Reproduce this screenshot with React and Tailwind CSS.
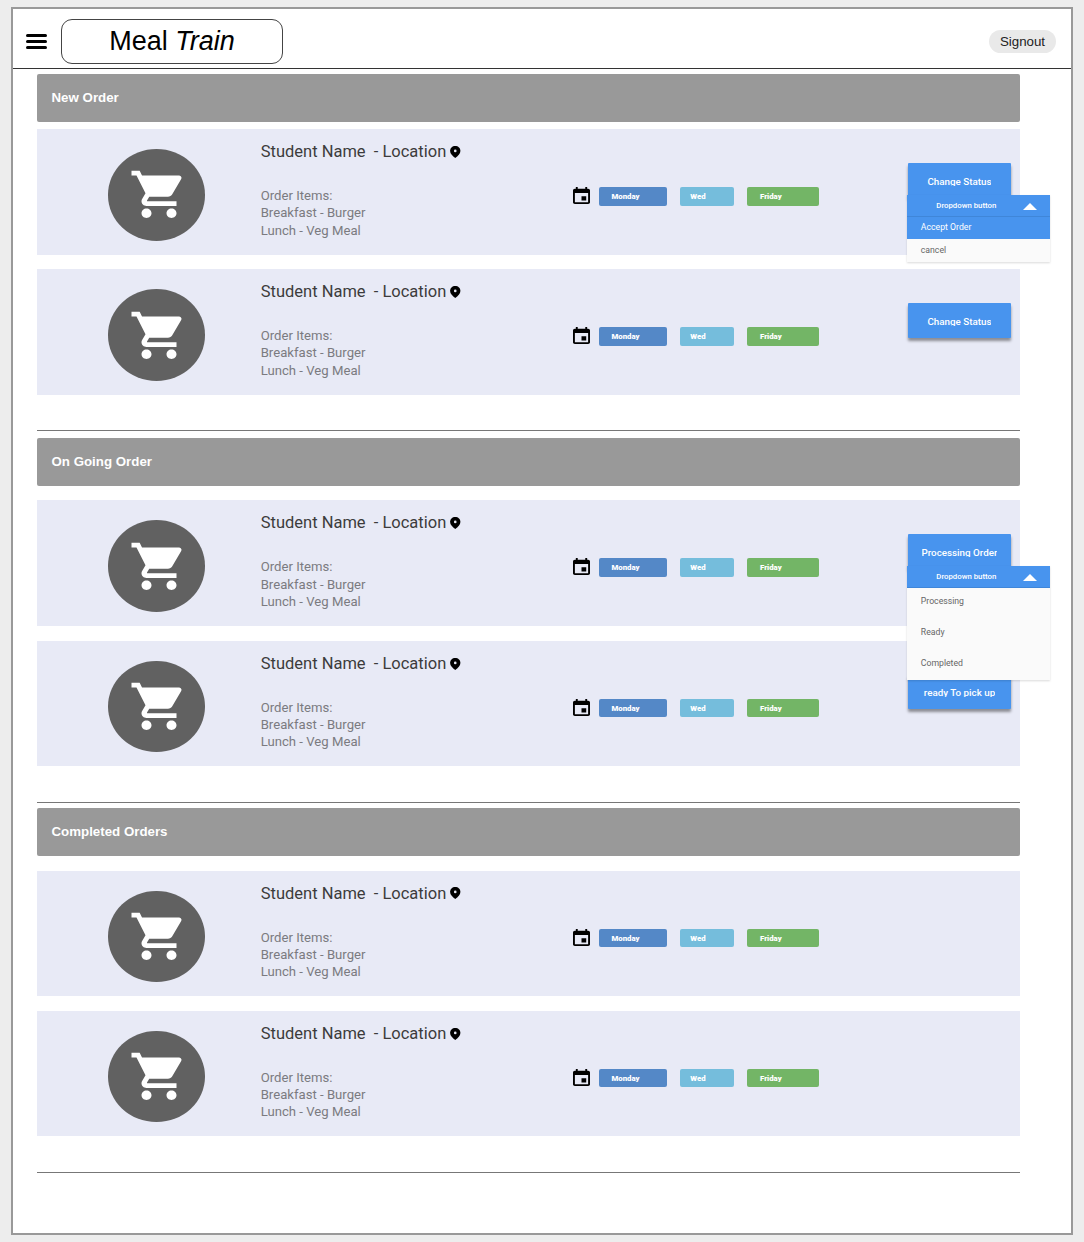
import React from "react";

function CartIcon() {
  return (
    <svg className="ml-[5px] h-[56.6px] w-[60px] shrink-0" viewBox="0 0 24 24" preserveAspectRatio="none" fill="#fff">
      <path d="M7 18c-1.1 0-1.99.9-1.99 2S5.9 22 7 22s2-.9 2-2-.9-2-2-2zM1 2v2h2l3.6 7.59-1.35 2.45c-.16.28-.25.61-.25.96 0 1.1.9 2 2 2h12v-2H7.42c-.14 0-.25-.11-.25-.25l.03-.12.9-1.63h7.45c.75 0 1.41-.41 1.75-1.03l3.58-6.49c.08-.14.12-.31.12-.48 0-.55-.45-1-1-1H5.21l-.94-2H1zm16 16c-1.1 0-1.99.9-1.99 2s.89 2 1.99 2 2-.9 2-2-.9-2-2-2z" />
    </svg>
  );
}

function PinIcon() {
  return (
    <svg className="mb-px ml-1 h-[12px] w-[10.5px] shrink-0" viewBox="0 0 10.5 12">
      <path d="M5.25 0C2.3 0 .1 2.1 .1 4.9 .1 7.7 2.6 9.9 5.25 12 7.9 9.9 10.4 7.7 10.4 4.9 10.4 2.1 8.2 0 5.25 0z" fill="#000" />
      <circle cx="5.25" cy="4.9" r="1.3" fill="#e8eaf6" />
    </svg>
  );
}

function EventIcon() {
  return (
    <svg className="h-[17px] w-[17px]" viewBox="3 1 18 20" preserveAspectRatio="none" fill="#000">
      <path d="M17 12h-5v5h5v-5zM16 1v2H8V1H6v2H5c-1.11 0-1.99.9-1.99 2L3 19c0 1.1.89 2 2 2h14c1.1 0 2-.9 2-2V5c0-1.1-.9-2-2-2h-1V1h-2zm3 18H5V8h14v11z" />
    </svg>
  );
}

function StatusButton({ label }) {
  return (
    <button className="mt-[34px] flex h-[34.5px] w-[103px] justify-center rounded-[1px] bg-[#4894ee] pt-[11.5px] shadow-[0_3px_3px_rgba(0,0,0,0.4)]">
      <span className="h-[11px] overflow-hidden whitespace-nowrap text-[9.8px] leading-[13px] font-medium text-white">
        {label}
      </span>
    </button>
  );
}

function Dropdown({ children }) {
  return (
    <div className="absolute top-[66px] left-[870.3px] z-10 w-[142.7px] bg-[#fafafa] shadow-[0_1px_2px_rgba(0,0,0,0.15)]">
      <div className="flex h-[22px] items-center justify-between border-b border-[#3f86d9] bg-[#4894ee] pr-[13px] pl-[29px]">
        <span className="text-[7.8px] leading-[20px] font-medium text-white">Dropdown button</span>
        <svg className="mt-[1px] h-[7px] w-[14px]" viewBox="0 0 14 7" preserveAspectRatio="none">
          <path d="M0 7 7 0l7 7z" fill="#fff" />
        </svg>
      </div>
      {children}
    </div>
  );
}

function AcceptMenu() {
  return (
    <Dropdown>
      <div className="h-[22px] bg-[#4894ee] pl-[13.5px] text-[8.7px] leading-[20px] text-white">Accept Order</div>
      <div className="h-[23px] pl-[13.5px] text-[8.7px] leading-[22px] text-[#666]">cancel</div>
    </Dropdown>
  );
}

function ProgressMenu() {
  return (
    <Dropdown>
      <div className="h-[91.5px] pt-px pl-[13.5px] text-[8.7px] leading-[31px] text-[#666]">
        <div className="-mt-[3.5px]">Processing</div>
        <div>Ready</div>
        <div>Completed</div>
      </div>
    </Dropdown>
  );
}

const tag = "h-[18.5px] rounded-[2px] text-[7.8px] leading-[20px] font-black text-white";

function OrderCard({ status, menu }) {
  return (
    <article className="relative flex h-[125.7px] w-[983px] bg-[#e8eaf6]">
      <div className="mt-[20px] ml-[71px] flex h-[91.5px] w-[97px] items-center justify-center rounded-[50%] bg-[#616161]">
        <CartIcon />
      </div>
      <div className="ml-[55.7px] w-[312.3px]">
        <h3 className="mt-[12.4px] flex h-[22px] items-center text-[16.5px] whitespace-pre text-[#3c3c3c]">
          {"Student Name  - Location"}
          <PinIcon />
        </h3>
        <div className="mt-[23.6px] text-[13.15px] leading-[17.3px] text-[#7b7b80]">
          <p>Order Items:</p>
          <p>Breakfast - Burger</p>
          <p>Lunch - Veg Meal</p>
        </div>
      </div>
      <div className="mt-[58px] flex h-[19px]">
        <EventIcon />
        <span className={`${tag} ml-[9px] w-[68px] bg-[#5488c7] pl-[12.5px]`}>Monday</span>
        <span className={`${tag} ml-[13.3px] w-[53.3px] bg-[#75bddc] pl-[10px]`}>Wed</span>
        <span className={`${tag} ml-[13.4px] w-[72px] bg-[#73b566] pl-[13px]`}>Friday</span>
      </div>
      <div className="ml-[89px]">{status && <StatusButton label={status} />}</div>
      {menu}
    </article>
  );
}

function Section({ title, gap, className, children }) {
  return (
    <section className={`w-[983px] border-b border-[#777] pb-[35.3px] ${className}`}>
      <h2 className="h-[48px] rounded-[2px] bg-[#999] pl-[14.5px] font-['Liberation_Sans',sans-serif] text-[13.3px] leading-[47px] font-bold text-white">
        {title}
      </h2>
      <div className={`flex flex-col gap-[14.5px] ${gap}`}>{children}</div>
    </section>
  );
}

export default function App() {
  return (
    <div className="h-[1242px] w-[1084px] bg-[#ededed] pt-[7px] pl-[11px] font-[Roboto,sans-serif]">
      <div className="h-[1228px] w-[1062px] border-2 border-[#999] bg-white">
        <header className="flex h-[60px] items-start border-b border-[#333] font-['Liberation_Sans',sans-serif]">
          <div className="mt-[25px] ml-[13px] flex w-[21px] flex-col gap-[3px]">
            <i className="h-[3px] rounded bg-black" />
            <i className="h-[3px] rounded bg-black" />
            <i className="h-[3px] rounded bg-black" />
          </div>
          <h1 className="mt-[10px] ml-[14px] h-[45px] w-[222px] rounded-[11px] border border-[#444] text-center text-[27px] leading-[43px] text-black">
            Meal <em>Train</em>
          </h1>
          <button className="mt-[21px] mr-[15px] ml-auto h-[23px] w-[67px] rounded-full bg-[#e9e9e9] text-[13.3px] leading-[23px] text-[#222]">
            Signout
          </button>
        </header>
        <main className="pt-[5px] pl-[24px]">
          <Section title="New Order" gap="mt-[7px]">
            <OrderCard status="Change Status" menu={<AcceptMenu />} />
            <OrderCard status="Change Status" />
          </Section>
          <Section title="On Going Order" gap="mt-[14.5px]" className="mt-[6.8px]">
            <OrderCard status="Processing Order" menu={<ProgressMenu />} />
            <OrderCard status="ready To pick up" />
          </Section>
          <Section title="Completed Orders" gap="mt-[14.3px]" className="mt-[5.6px]">
            <OrderCard />
            <OrderCard />
          </Section>
        </main>
      </div>
    </div>
  );
}
